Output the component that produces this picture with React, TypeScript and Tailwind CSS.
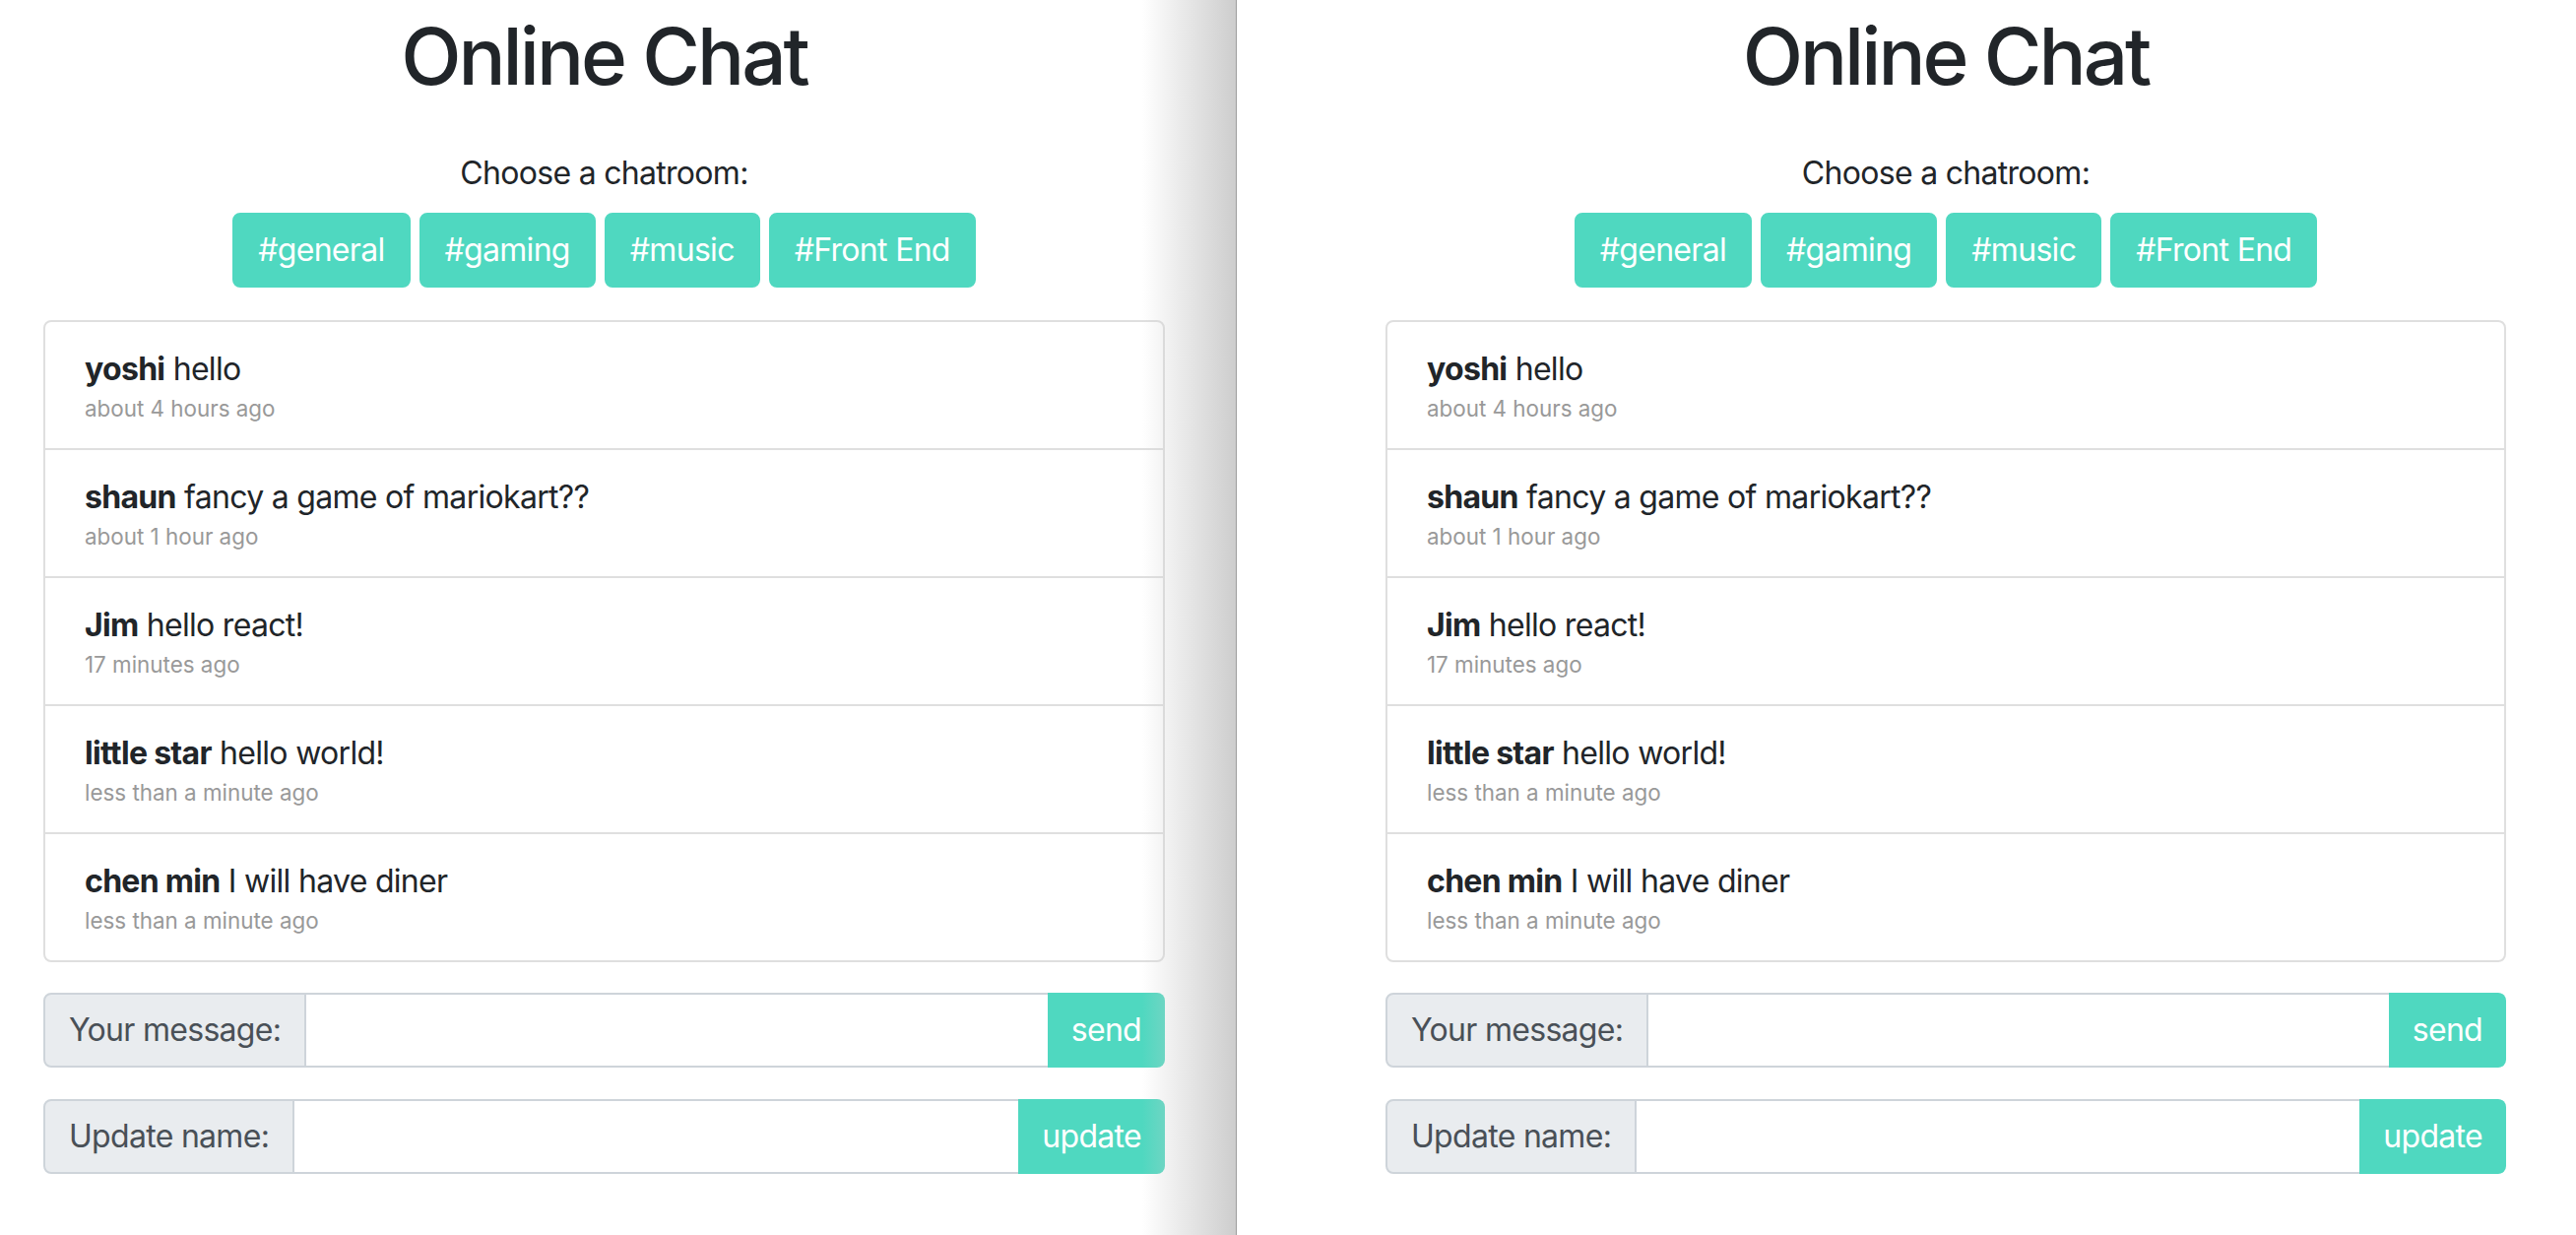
import React from "react";

const rooms = ["#general", "#gaming", "#music", "#Front End"];

const messages = [
  { name: "yoshi", text: "hello", time: "about 4 hours ago" },
  { name: "shaun", text: "fancy a game of mariokart??", time: "about 1 hour ago" },
  { name: "Jim", text: "hello react!", time: "17 minutes ago" },
  { name: "little star", text: "hello world!", time: "less than a minute ago" },
  { name: "chen min", text: "I will have diner", time: "less than a minute ago" },
];

function InputRow({ label, button }: { label: string; button: string }) {
  return (
    <div className="flex h-[76px] w-full">
      <div className="flex items-center px-[24px] bg-[#e9ecef] border-2 border-[#ced4da] rounded-l-[8px] text-[32px] leading-[48px] text-[#495057] whitespace-nowrap">
        {label}
      </div>
      <div className="flex-1 bg-white border-y-2 border-[#ced4da]" />
      <button className="px-[24px] bg-[#4fd8c0] text-white text-[32px] leading-[48px] tracking-[-0.7px] rounded-r-[8px]">
        {button}
      </button>
    </div>
  );
}

function ChatContent() {
  return (
    <div className="flex flex-col w-full text-[#212529] tracking-[-0.7px]">
      <h1 className="mt-[9px] text-center text-[80px] leading-[96px] font-medium tracking-[-3px]">Online Chat</h1>
      <div className="mt-[47px] text-center text-[32px] leading-[48px]">Choose a chatroom:</div>
      <div className="mt-[16px] flex justify-center gap-[9px]">
        {rooms.map((r) => (
          <button
            key={r}
            className="h-[76px] px-[24px] bg-[#4fd8c0] border-2 border-[#4fd8c0] rounded-[8px] text-white text-[32px] leading-[48px] tracking-[-0.7px]"
          >
            {r}
          </button>
        ))}
      </div>
      <div className="mt-[33px] border-2 border-[#dfdfdf] rounded-[8px] bg-white">
        {messages.map((m, i) => (
          <div
            key={i}
            className={`px-[40px] pt-[24px] pb-[24px] ${i > 0 ? "border-t-2 border-[#dfdfdf]" : ""}`}
          >
            <div className="text-[32px] leading-[48px] whitespace-nowrap">
              <span className="font-bold">{m.name}</span> {m.text}
            </div>
            <div className="text-[22.4px] leading-[32px] text-[#999999] tracking-normal">{m.time}</div>
          </div>
        ))}
      </div>
      <div className="mt-[31px]">
        <InputRow label="Your message:" button="send" />
      </div>
      <div className="mt-[32px]">
        <InputRow label="Update name:" button="update" />
      </div>
    </div>
  );
}

export default function App() {
  return (
    <div className="flex w-[2616px] h-[1254px] bg-white overflow-hidden font-['Inter','Liberation_Sans',sans-serif]">
      <div className="relative w-[1256px] shrink-0 pl-[44px] pr-[73px]">
        <ChatContent />
        <div className="absolute top-0 right-0 bottom-0 w-[96px] bg-gradient-to-r from-[rgba(255,255,255,0)] to-[#cdcdcd] border-r border-[#9e9e9e] pointer-events-none" />
      </div>
      <div className="flex-1 pl-[151px] pr-[71px]">
        <ChatContent />
      </div>
    </div>
  );
}
